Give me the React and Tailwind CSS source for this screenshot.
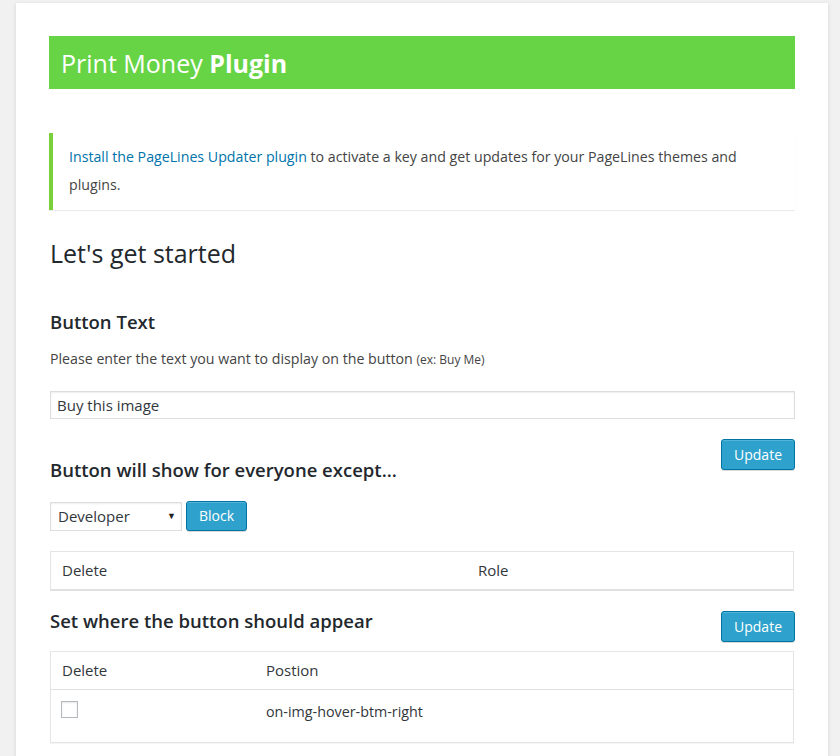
export default function App() {
  const font = { fontFamily: '"Open Sans", "Noto Sans", sans-serif' };
  const btn =
    "h-[31px] px-[12px] rounded-[3px] bg-[#2ea2cc] border border-[#0074a2] text-white text-[14px] leading-[29px] shadow-[inset_0_1px_0_rgba(120,200,230,0.5),0_1px_0_rgba(0,0,0,0.15)]";
  return (
    <div className="min-h-[756px] bg-[#f1f1f1] pt-[3px] pl-[16px]" style={font}>
      <div className="w-[812px] min-h-[753px] bg-white shadow-[0_1px_4px_rgba(0,0,0,0.13)] px-[33px] pt-[33px] pb-[20px] text-[#444]">
        <div className="h-[53px] bg-[#67d446] pl-[12px] flex items-center">
          <span className="text-white text-[25px] leading-[30px]">
            Print Money <b className="font-bold">Plugin</b>
          </span>
        </div>

        <div className="mt-[44px] border-l-4 border-[#7ad03a] bg-white shadow-[0_1px_1px_rgba(0,0,0,0.08)] pl-[16px] pr-[28px] pt-[10px] pb-[11px] text-[14.2px] leading-[28px]">
          <a className="text-[#0073aa]">Install the PageLines Updater plugin</a> to activate a key and get updates for your PageLines themes and plugins.
        </div>

        <h1 className="mt-[28px] ml-[1px] text-[25px] leading-[30px] font-normal text-[#23282d]">Let's get started</h1>

        <h3 className="mt-[42px] ml-[1px] text-[18.5px] leading-[24px] font-semibold text-[#23282d]">Button Text</h3>

        <p className="mt-[15px] ml-[1px] text-[14.2px] leading-[20px] text-[#444]">
          Please enter the text you want to display on the button <span className="text-[12px]">(ex: Buy Me)</span>
        </p>

        <div className="mt-[21px] ml-[1px] h-[28px] border border-[#ddd] shadow-[inset_0_1px_2px_rgba(0,0,0,0.07)] pl-[6px] flex items-center text-[15px] text-[#32373c]">
          Buy this image
        </div>

        <div className="mt-[20px] flex items-start justify-between ml-[1px]">
          <h2 className="mt-[17px] text-[18.5px] leading-[28px] font-semibold text-[#23282d]">Button will show for everyone except...</h2>
          <button className={btn}>Update</button>
        </div>

        <div className="mt-[17px] ml-[1px] flex items-center gap-[4px]">
          <div className="relative w-[132px] h-[29px] border border-[#ddd] shadow-[inset_0_1px_2px_rgba(0,0,0,0.07)] pl-[7px] flex items-center text-[15px] text-[#32373c]">
            Developer
            <span className="absolute right-[5px] top-[7px] text-[9px] leading-[12px] text-[#222]">▼</span>
          </div>
          <button className="h-[30px] px-[12px] rounded-[3px] bg-[#2ea2cc] border border-[#0074a2] text-white text-[14px] leading-[28px] shadow-[inset_0_1px_0_rgba(120,200,230,0.5),0_1px_0_rgba(0,0,0,0.15)]">
            Block
          </button>
        </div>

        <div className="mt-[20px] ml-[1px] w-[744px] border border-[#e5e5e5] border-b-2 border-b-[#e1e1e1] bg-white flex text-[15px] text-[#32373c]">
          <div className="w-[416px] h-[37px] pl-[11px] flex items-center">Delete</div>
          <div className="h-[37px] pl-[11px] flex items-center">Role</div>
        </div>

        <div className="mt-[16px] flex items-start justify-between ml-[1px]">
          <h2 className="text-[18.5px] leading-[28px] font-semibold text-[#23282d]">Set where the button should appear</h2>
          <button className={btn + " mt-[4px]"}>Update</button>
        </div>

        <div className="mt-[9px] ml-[1px] w-[744px] border border-[#e5e5e5] bg-white text-[#32373c] shadow-[0_1px_1px_rgba(0,0,0,0.04)]">
          <div className="flex h-[38px] border-b border-[#e1e1e1] text-[15px]">
            <div className="w-[204px] pl-[11px] flex items-center">Delete</div>
            <div className="pl-[11px] flex items-center">Postion</div>
          </div>
          <div className="flex h-[52px] text-[14.3px]">
            <div className="w-[204px] pl-[10px] pt-[11px]">
              <div className="w-[17px] h-[17px] border border-[#b4b9be] bg-white shadow-[inset_0_1px_2px_rgba(0,0,0,0.1)]"></div>
            </div>
            <div className="pl-[11px] pt-[12px] leading-[20px]">on-img-hover-btm-right</div>
          </div>
        </div>
      </div>
    </div>
  );
}
